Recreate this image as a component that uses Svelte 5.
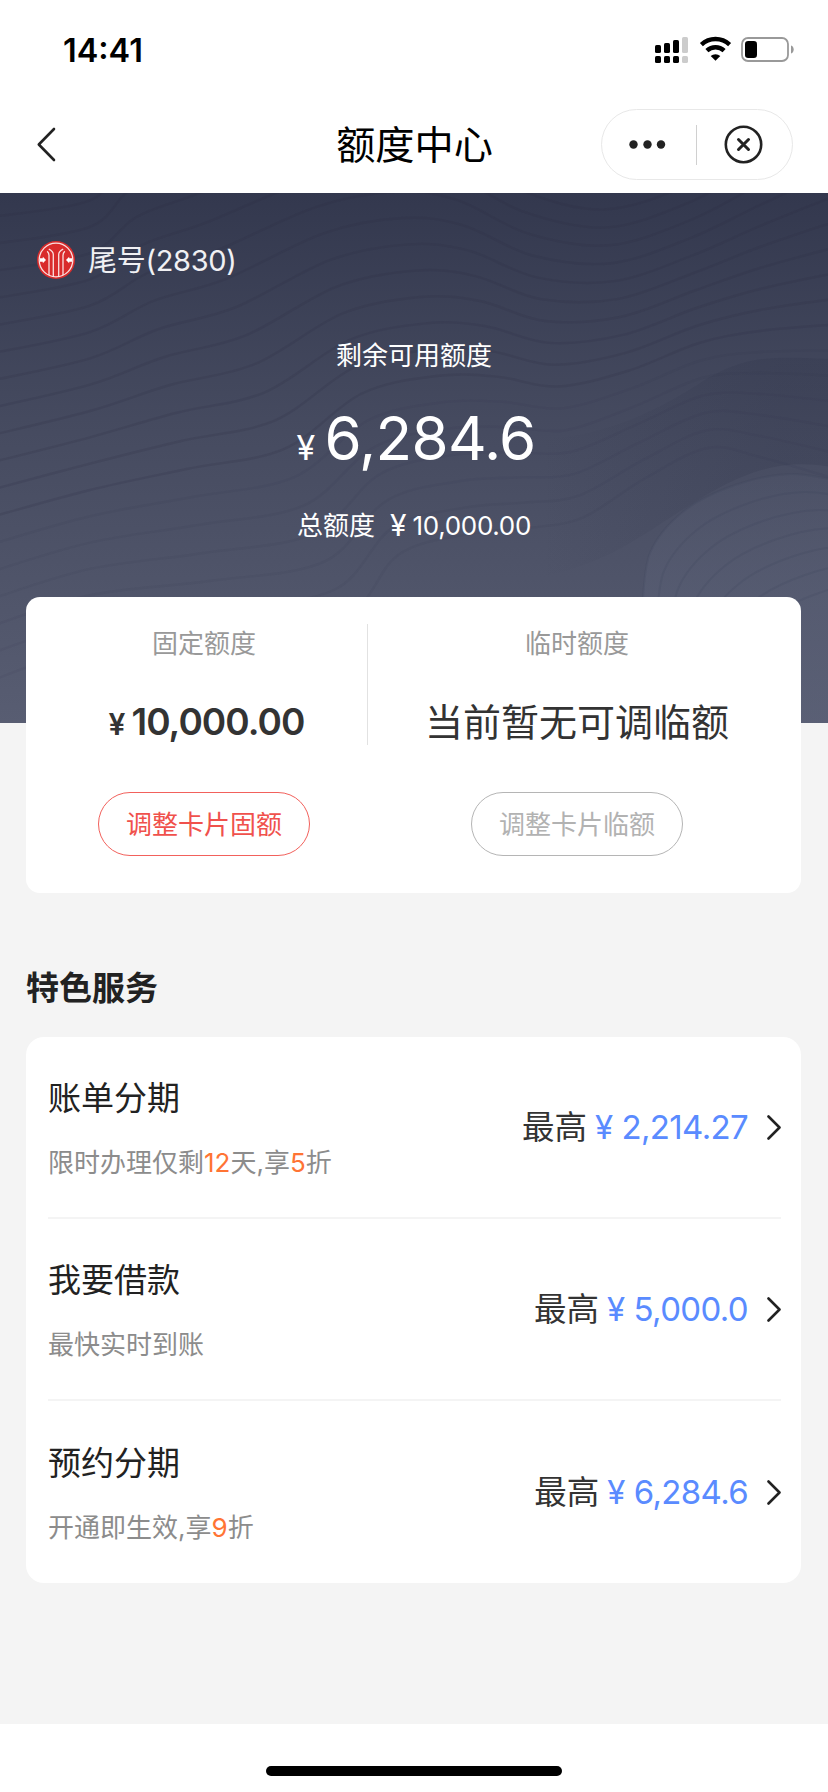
<script lang="ts">
  interface Note { text: string; hot?: boolean }
  interface Service { title: string; note: Note[]; max: string }

  const services: Service[] = [
    {
      title: '账单分期',
      note: [{ text: '限时办理仅剩' }, { text: '12', hot: true }, { text: '天,享' }, { text: '5', hot: true }, { text: '折' }],
      max: '2,214.27',
    },
    { title: '我要借款', note: [{ text: '最快实时到账' }], max: '5,000.0' },
    {
      title: '预约分期',
      note: [{ text: '开通即生效,享' }, { text: '9', hot: true }, { text: '折' }],
      max: '6,284.6',
    },
  ];

  type Point = [number, number];

  // contour lines are blended between these two
  const upper: Point[] = [[-10, 145], [90, 124], [150, 92], [220, 70], [320, 25], [400, 10], [460, 18], [530, 50], [610, 60], [690, 35], [760, 0], [840, -40]];
  const lower: Point[] = [[-10, 340], [90, 312], [190, 292], [290, 272], [365, 216], [440, 198], [500, 198], [560, 206], [630, 188], [700, 160], [760, 150], [840, 146]];
  const mound: Point[] = [[642, 420], [650, 360], [684, 318], [735, 292], [790, 281], [840, 288]];

  function smooth(pts: Point[]): string {
    let d = `M${pts[0][0]} ${pts[0][1]}`;
    for (let i = 0; i < pts.length - 1; i++) {
      const a = pts[i - 1] ?? pts[i];
      const b = pts[i];
      const c = pts[i + 1];
      const e = pts[i + 2] ?? c;
      d += `C${b[0] + (c[0] - a[0]) / 6} ${b[1] + (c[1] - a[1]) / 6} ${c[0] - (e[0] - b[0]) / 6} ${c[1] - (e[1] - b[1]) / 6} ${c[0]} ${c[1]}`;
    }
    return d;
  }

  const contours = Array.from({ length: 20 }, (_, i) => {
    const t = -0.9 + i * 0.14;
    return {
      d: smooth(upper.map((p, n): Point => [p[0] + (lower[n][0] - p[0]) * t, p[1] + (lower[n][1] - p[1]) * t])),
      opacity: t > 1 ? 0.07 : 0.18,
    };
  });
  const rings = Array.from({ length: 7 }, (_, i) => smooth(mound.map((p): Point => [p[0] + i * 14, p[1] + i * 18])));
</script>

<div class="screen">
  <header class="status">
    <span class="time">14:41</span>
    <svg width="140" height="28" viewBox="0 0 140 28" aria-hidden="true">
      <g>
        <rect x="1" y="9" width="6" height="8" rx="1.6" />
        <rect x="10" y="7" width="6" height="10" rx="1.6" />
        <rect x="19" y="4" width="6" height="13" rx="1.6" />
        <rect x="28" y="1" width="6" height="16" rx="1.6" fill="#ccc" />
        <rect x="1" y="20" width="6" height="7" rx="1.6" />
        <rect x="10" y="20" width="6" height="7" rx="1.6" />
        <rect x="19" y="20" width="6" height="7" rx="1.6" />
        <rect x="28" y="20" width="6" height="7" rx="1.6" fill="#ccc" />
      </g>
      <g fill="none" stroke="#000" stroke-width="4.4">
        <path d="M47.4 8.6a20.6 20.6 0 0 1 28.2 0" />
        <path d="M52.9 14.6a12.6 12.6 0 0 1 17.2 0" />
      </g>
      <path d="M61.5 24.8l-4.8-4.7a7 7 0 0 1 9.6 0z" />
      <rect x="88" y="2" width="46" height="23" rx="6" fill="none" stroke="#999" stroke-width="1.8" />
      <rect x="91" y="5" width="12" height="17" rx="3.2" />
      <path d="M137 9.5c3.6 1 3.6 7 0 8z" fill="#999" />
    </svg>
  </header>

  <nav class="navbar">
    <svg class="back" width="20" height="36" viewBox="0 0 20 36" fill="none" stroke="#222" stroke-width="2.6" stroke-linecap="round" stroke-linejoin="round">
      <path d="M18 2L2.8 17.5 18 33" />
    </svg>
    <h1>额度中心</h1>
    <div class="capsule">
      <svg width="90" height="70" viewBox="0 0 90 70" fill="#222">
        <circle cx="31.5" cy="34.5" r="4.2" />
        <circle cx="45.5" cy="34.5" r="4.2" />
        <circle cx="59" cy="34.5" r="4.2" />
      </svg>
      <i></i>
      <svg width="90" height="70" viewBox="0 0 90 70" fill="none" stroke="#222">
        <circle cx="46.5" cy="34.5" r="17.7" stroke-width="2.6" />
        <path d="M41.5 29.5l10 10M51.5 29.5l-10 10" stroke-width="3" stroke-linecap="round" />
      </svg>
    </div>
  </nav>

  <main>
    <section class="hero">
      <svg class="waves" viewBox="0 0 828 530" aria-hidden="true">
        <defs>
          <linearGradient id="slope" gradientUnits="userSpaceOnUse" x1="540" y1="0" x2="780" y2="0">
            <stop offset="0" stop-color="#2b3046" stop-opacity="0" />
            <stop offset="1" stop-color="#2b3046" stop-opacity="0.2" />
          </linearGradient>
          <linearGradient id="mound" x1="0" y1="0" x2="0" y2="1">
            <stop offset="0" stop-color="#5c6278" stop-opacity="0.15" />
            <stop offset="0.5" stop-color="#5c6278" stop-opacity="0.45" />
          </linearGradient>
        </defs>
        <g fill="none" stroke="#2a2e42" stroke-width="2.4">
          {#each contours as c}
            <path d={c.d} stroke-opacity={c.opacity} />
          {/each}
        </g>
        <path d="M540 246C600 244 650 222 700 190S780 165 840 166V276C780 262 740 281 690 312S610 370 540 384z" fill="url(#slope)" />
        <path d="{smooth(mound)}V540H650z" fill="url(#mound)" />
        <g fill="none" stroke="#343a52" stroke-opacity="0.12" stroke-width="2">
          {#each rings as d}
            <path {d} />
          {/each}
        </g>
      </svg>

      <div class="account">
        <svg width="38" height="38" viewBox="0 0 38 38">
          <circle cx="19" cy="19" r="19" fill="#d92b2b" />
          <g fill="none" stroke="#fff" stroke-opacity="0.85" stroke-width="1.3">
            <circle cx="19" cy="19" r="16.8" />
            <path d="M16.3 35.5V13.5q0-3.3-4.5-5.4M21.7 35.5V13.5q0-3.3 4.5-5.4" />
            <path d="M12 34V14.5q0-2.6-1.8-4.3M26 34V14.5q0-2.6 1.8-4.3" />
          </g>
          <path d="M3 17.2h2.8v-1.5L9 19l-3.2 3.3v-1.500H3zM35 17.2h-2.8v-1.500L29 19l3.200 3.300v-1.500H35z" fill="#fff" />
        </svg>
        <span>尾号(2830)</span>
      </div>
      <p class="caption">剩余可用额度</p>
      <p class="available"><span>¥</span>6,284.6</p>
      <p class="total">总额度<span class="yen">¥</span><span class="sum">10,000.00</span></p>
    </section>

    <section class="card limits">
      <div class="limit">
        <h3>固定额度</h3>
        <p class="amount"><span>¥</span>10,000.00</p>
        <button type="button">调整卡片固额</button>
      </div>
      <i class="split"></i>
      <div class="limit temp">
        <h3>临时额度</h3>
        <p>当前暂无可调临额</p>
        <button type="button" disabled>调整卡片临额</button>
      </div>
    </section>

    <h2>特色服务</h2>
    <section class="card services">
      {#each services as s}
        <div class="service">
          <div class="info">
            <h3>{s.title}</h3>
            <p>{#each s.note as n}<span class:hot={n.hot}>{n.text}</span>{/each}</p>
          </div>
          <span class="top">最高</span>
          <span class="max"><span>¥</span>{s.max}</span>
          <svg width="15" height="26" viewBox="0 0 15 26" fill="none" stroke="#222" stroke-width="2.6" stroke-linecap="round" stroke-linejoin="round">
            <path d="M2.5 2.5l11 11-11 11" />
          </svg>
        </div>
      {/each}
    </section>
  </main>

  <footer><i></i></footer>
</div>

<style>
  :global(body) {
    margin: 0;
    background: #fff;
  }
  .screen {
    display: flex;
    flex-direction: column;
    width: 828px;
    height: 1792px;
    font-family: Inter, 'Noto Sans CJK SC', sans-serif;
    color: #222;
    overflow: hidden;
  }
  h1, h2, h3, p { margin: 0; font-weight: 400; }
  svg { display: block; flex: none; }

  .status {
    display: flex;
    justify-content: space-between;
    align-items: center;
    height: 96px;
    padding: 4px 34px 0 63px;
    box-sizing: border-box;
  }
  .time {
    font-size: 32.4px;
    font-weight: 600;
    color: #000;
  }
  .navbar {
    display: grid;
    grid-template-columns: 1fr auto 1fr;
    align-items: center;
    height: 97px;
    padding: 0 35px 0 36px;
    box-sizing: border-box;
  }
  h1 {
    font-size: 39.2px;
    line-height: 56px;
    color: #000;
  }
  .capsule {
    display: flex;
    align-items: center;
    justify-self: end;
    width: 192px;
    height: 71px;
    border: 1px solid #e8e8e8;
    border-radius: 36px;
    box-sizing: border-box;
  }
  .capsule i {
    flex: none;
    width: 1px;
    height: 40px;
    margin: 0 4px;
    background: #d0d0d0;
  }
  .capsule svg:last-child { margin-left: -4px; }

  main {
    flex: 1;
    padding: 0 27px 0 26px;
    background: #f4f4f4;
  }
  .hero {
    position: relative;
    height: 530px;
    margin: 0 -27px 0 -26px;
    padding-top: 46px;
    box-sizing: border-box;
    background: linear-gradient(#33384e, #464b60 45%, #585d72);
    color: #fff;
    text-align: center;
  }
  .waves {
    position: absolute;
    inset: 0;
    width: 828px;
    height: 530px;
    overflow: hidden;
  }
  .account, .hero p { position: relative; }
  .account {
    display: flex;
    align-items: center;
    height: 42px;
    padding-left: 37px;
    gap: 13px;
    font-size: 29px;
    line-height: 42px;
    letter-spacing: -0.3px;
    color: #f0f0f3;
  }
  .account span { padding-top: 2px; }
  .caption {
    margin-top: 55px;
    font-size: 26px;
    line-height: 40px;
  }
  .available {
    height: 80px;
    margin-top: 22px;
    padding-left: 4px;
    font-size: 60px;
    line-height: 80px;
    letter-spacing: -0.7px;
  }
  .available span {
    margin-right: 10px;
    font-size: 34px;
  }
  .total {
    display: flex;
    justify-content: center;
    margin-top: 28px;
    font-size: 26px;
    line-height: 40px;
  }
  .sum { letter-spacing: -0.3px; }
  .yen {
    margin: 0 6px 0 15px;
    font-size: 30px;
    line-height: 38px;
  }

  .card {
    background: #fff;
    border-radius: 18px;
  }
  .limits {
    display: flex;
    position: relative;
    height: 296px;
    margin-top: -126px;
    border-radius: 14px;
  }
  .limit {
    display: flex;
    flex-direction: column;
    align-items: center;
    width: 341px;
    padding: 27px 0 0 15px;
    box-sizing: border-box;
  }
  .limit.temp {
    flex: 1;
    padding: 27px 15px 0 0;
  }
  .limit h3 {
    font-size: 26px;
    line-height: 40px;
    color: #999;
  }
  .limit p {
    height: 60px;
    margin-top: 28px;
    font-size: 38px;
    line-height: 60px;
    color: #333;
  }
  .limit .amount {
    padding-left: 5px;
    font-size: 37px;
    font-weight: 600;
    letter-spacing: -0.95px;
  }
  .amount span {
    margin-right: 7px;
    font-size: 30px;
  }
  .split {
    width: 1px;
    height: 121px;
    margin-top: 27px;
    background: #e2e2e2;
  }
  button {
    width: 212px;
    height: 64px;
    margin-top: 40px;
    padding: 0 0 4px;
    border: 1px solid #f2615c;
    border-radius: 32px;
    background: #fff;
    font: inherit;
    font-size: 26px;
    color: #f0514c;
  }
  button:disabled {
    border-color: #b5b5b5;
    color: #b2b2b2;
  }

  h2 {
    margin: 71px 0 25px;
    font-size: 33px;
    font-weight: 700;
    line-height: 48px;
  }
  .services {
    height: 546px;
    padding: 0 20px 0 22px;
    box-sizing: border-box;
  }
  .service {
    display: flex;
    align-items: center;
    height: 182px;
    box-sizing: border-box;
    border-bottom: 2px solid #f4f4f4;
  }
  .service:last-child { border-bottom: none; }
  .info {
    flex: 1;
    padding-top: 3px;
  }
  .info h3 {
    font-size: 33px;
    line-height: 48px;
  }
  .info p {
    margin-top: 21px;
    font-size: 26px;
    line-height: 40px;
    color: #8c8c8c;
  }
  .info .hot { color: #ff7434; }
  .top {
    padding-top: 2px;
    font-size: 32.5px;
    line-height: 46px;
    color: #333;
  }
  .max {
    margin: 0 18px 0 8px;
    font-size: 33px;
    letter-spacing: -0.65px;
    color: #5a8bff;
  }
  .max span { margin-right: 9px; }

  footer {
    display: flex;
    justify-content: center;
    height: 68px;
    padding-top: 42px;
    box-sizing: border-box;
    background: #fff;
  }
  footer i {
    width: 296px;
    height: 10px;
    border-radius: 5px;
    background: #000;
  }
</style>
